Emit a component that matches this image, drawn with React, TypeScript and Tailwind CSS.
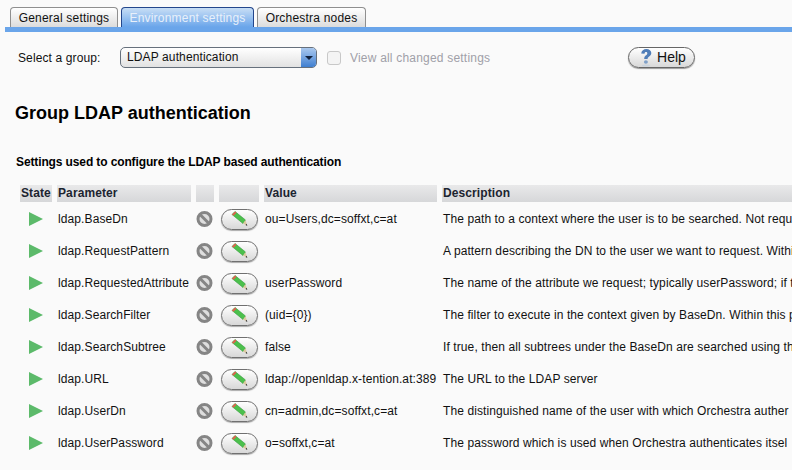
import React from 'react';

// descriptions run past the right edge of the window, only the visible part is known
const settings = [
  { name: 'ldap.BaseDn', value: 'ou=Users,dc=soffxt,c=at', description: 'The path to a context where the user is to be searched. Not requi' },
  { name: 'ldap.RequestPattern', value: '', description: 'A pattern describing the DN to the user we want to request. Withi' },
  { name: 'ldap.RequestedAttribute', value: 'userPassword', description: 'The name of the attribute we request; typically userPassword; if t' },
  { name: 'ldap.SearchFilter', value: '(uid={0})', description: 'The filter to execute in the context given by BaseDn. Within this pa' },
  { name: 'ldap.SearchSubtree', value: 'false', description: 'If true, then all subtrees under the BaseDn are searched using th' },
  { name: 'ldap.URL', value: 'ldap://openldap.x-tention.at:389', description: 'The URL to the LDAP server' },
  { name: 'ldap.UserDn', value: 'cn=admin,dc=soffxt,c=at', description: 'The distinguished name of the user with which Orchestra auther' },
  { name: 'ldap.UserPassword', value: 'o=soffxt,c=at', description: 'The password which is used when Orchestra authenticates itsel' },
];

const rowGrid = 'grid grid-cols-[32px_134px_18px_40px_173px_350px] gap-x-[5px]';
const headCell = 'h-[17px] bg-gradient-to-b from-[#e9e9ea] to-[#d6d7d9] pl-[1px] font-bold leading-[17px] tracking-[0.1px] text-[#1c2430] whitespace-nowrap overflow-hidden';
const tabBase = 'flex h-[20px] items-center rounded-t-[4px] border border-b-0 text-[12px] tracking-[0.2px]';

const BlockIcon = () => (
  <svg width="18" height="18" viewBox="0 0 18 18">
    <circle cx="8.500" cy="9" r="6.500" fill="#dedede" stroke="#858585" strokeWidth="3" />
    <path d="M4.500 5l8 8" stroke="#858585" strokeWidth="3" />
  </svg>
);

const PencilIcon = () => (
  <svg width="20" height="18" viewBox="0 0 20 18">
    <path d="M2 4.500L5 1.500l10.500 8.500-2.500 3.500z" fill="#4cc04c" stroke="#2f9a38" strokeWidth="0.6" />
    <path d="M2 4.500L5 1.500l1.500 1.200-3 3z" fill="#e2604f" />
    <path d="M13 13.500l2.500-3.500 1.500 5.500z" fill="#dcc9a0" />
    <path d="M15.500 15l1.300-1.300.5 2.200z" fill="#333" />
  </svg>
);

const HelpMark = () => (
  <svg width="14" height="19" viewBox="0 0 14 19">
    <path d="M2.200 5.500C2.500 2.500 4.700 1 7.300 1c3 0 5 1.700 5 4.100 0 2-1.200 2.900-2.400 3.700-.9.600-1.300 1.100-1.300 2.200H5.200c0-2 .6-3 1.800-3.800.8-.6 1.300-1 1.300-1.800 0-.8-.5-1.300-1.300-1.300-.9 0-1.400.6-1.500 1.600z" fill="#4f7db8" />
    <ellipse cx="6.900" cy="14" rx="2" ry="1.800" fill="#7fa0c8" />
    <ellipse cx="6.900" cy="17.500" rx="4" ry="1" fill="#c9d3de" />
  </svg>
);

export default function App() {
  return (
    <div className="h-[470px] w-[792px] overflow-hidden bg-[#fafafa] font-['Liberation_Sans',Arial,sans-serif] text-[12px] tracking-[0.1px] text-[#111]">
      <div className="flex gap-[3px] pl-[10px] pt-[7px]">
        <div className={`${tabBase} w-[108px] justify-center border-[#8f8f8f] bg-gradient-to-b from-white to-[#dcdcdc]`}>General settings</div>
        <div className={`${tabBase} w-[133px] justify-center border-[#23468c] bg-gradient-to-b from-[#c8def5] to-[#6aa5ea] text-[#e8f0fa]`}>Environment settings</div>
        <div className={`${tabBase} w-[109px] justify-center border-[#8f8f8f] bg-gradient-to-b from-white to-[#dcdcdc]`}>Orchestra nodes</div>
      </div>
      <div className="ml-[5px] h-[5px] bg-[#6aa5ea]" />

      <div className="flex h-[51px] items-center pl-[18px]">
        <span className="w-[102px] tracking-[0.12px]">Select a group:</span>
        <div className="flex h-[21px] w-[197px] overflow-hidden rounded-[5px] border border-[#66707c] bg-gradient-to-b from-white to-[#e2e2e2]">
          <span className="flex-1 pl-[6px] leading-[19px] tracking-[0.12px]">LDAP authentication</span>
          <div className="flex w-[15px] items-center justify-center bg-gradient-to-b from-[#a9c8ee] to-[#3f7fd0]">
            <div className="h-0 w-0 border-x-[4px] border-t-[4px] border-x-transparent border-t-[#10203c]" />
          </div>
        </div>
        <div className="ml-[10px] h-[14px] w-[14px] rounded-[3px] border border-[#c8c8c8] bg-[#f4f4f4]" />
        <span className="ml-[9px] w-[140px] whitespace-nowrap tracking-[0.2px] text-[#a0a0a8]">View all changed settings</span>
        <div className="ml-[138px] flex h-[21px] w-[67px] items-center justify-center gap-[4px] rounded-full border border-[#666] bg-gradient-to-b from-white to-[#d8d8d8] pl-[2px] text-[14px] tracking-normal shadow-[0_1px_1px_#999]">
          <HelpMark />
          <span>Help</span>
        </div>
      </div>

      <h2 className="mt-[19px] pl-[15px] text-[18px] font-bold leading-[22px] tracking-normal text-black">Group LDAP authentication</h2>
      <p className="mt-[31px] pl-[16px] font-bold leading-[14px] tracking-[-0.12px] text-black">Settings used to configure the LDAP based authentication</p>

      <div className="mt-[16px] pl-[20px]">
        <div className={`${rowGrid} mb-[1px]`}>
          <div className={headCell}>State</div>
          <div className={headCell}>Parameter</div>
          <div className={headCell} />
          <div className={headCell} />
          <div className={headCell}>Value</div>
          <div className={headCell}>Description</div>
        </div>
        {settings.map((s) => (
          <div key={s.name} className={`${rowGrid} h-[32px] items-center`}>
            <div className="pl-[9px]">
              <div className="h-0 w-0 border-y-[7.5px] border-l-[14px] border-y-transparent border-l-[#5cba6a]" />
            </div>
            <div className="overflow-hidden whitespace-nowrap pl-[1px]">{s.name}</div>
            <div className="flex justify-start"><BlockIcon /></div>
            <div className="flex h-[21px] w-[37px] translate-x-[2px] items-center justify-center rounded-full border border-[#707070] bg-gradient-to-b from-white to-[#d8d8d8] shadow-[0_1px_1px_#aaa]">
              <PencilIcon />
            </div>
            <div className="overflow-hidden whitespace-nowrap pl-[1px]">{s.value}</div>
            <div className="overflow-hidden whitespace-nowrap pl-[1px]">{s.description}</div>
          </div>
        ))}
      </div>
    </div>
  );
}
